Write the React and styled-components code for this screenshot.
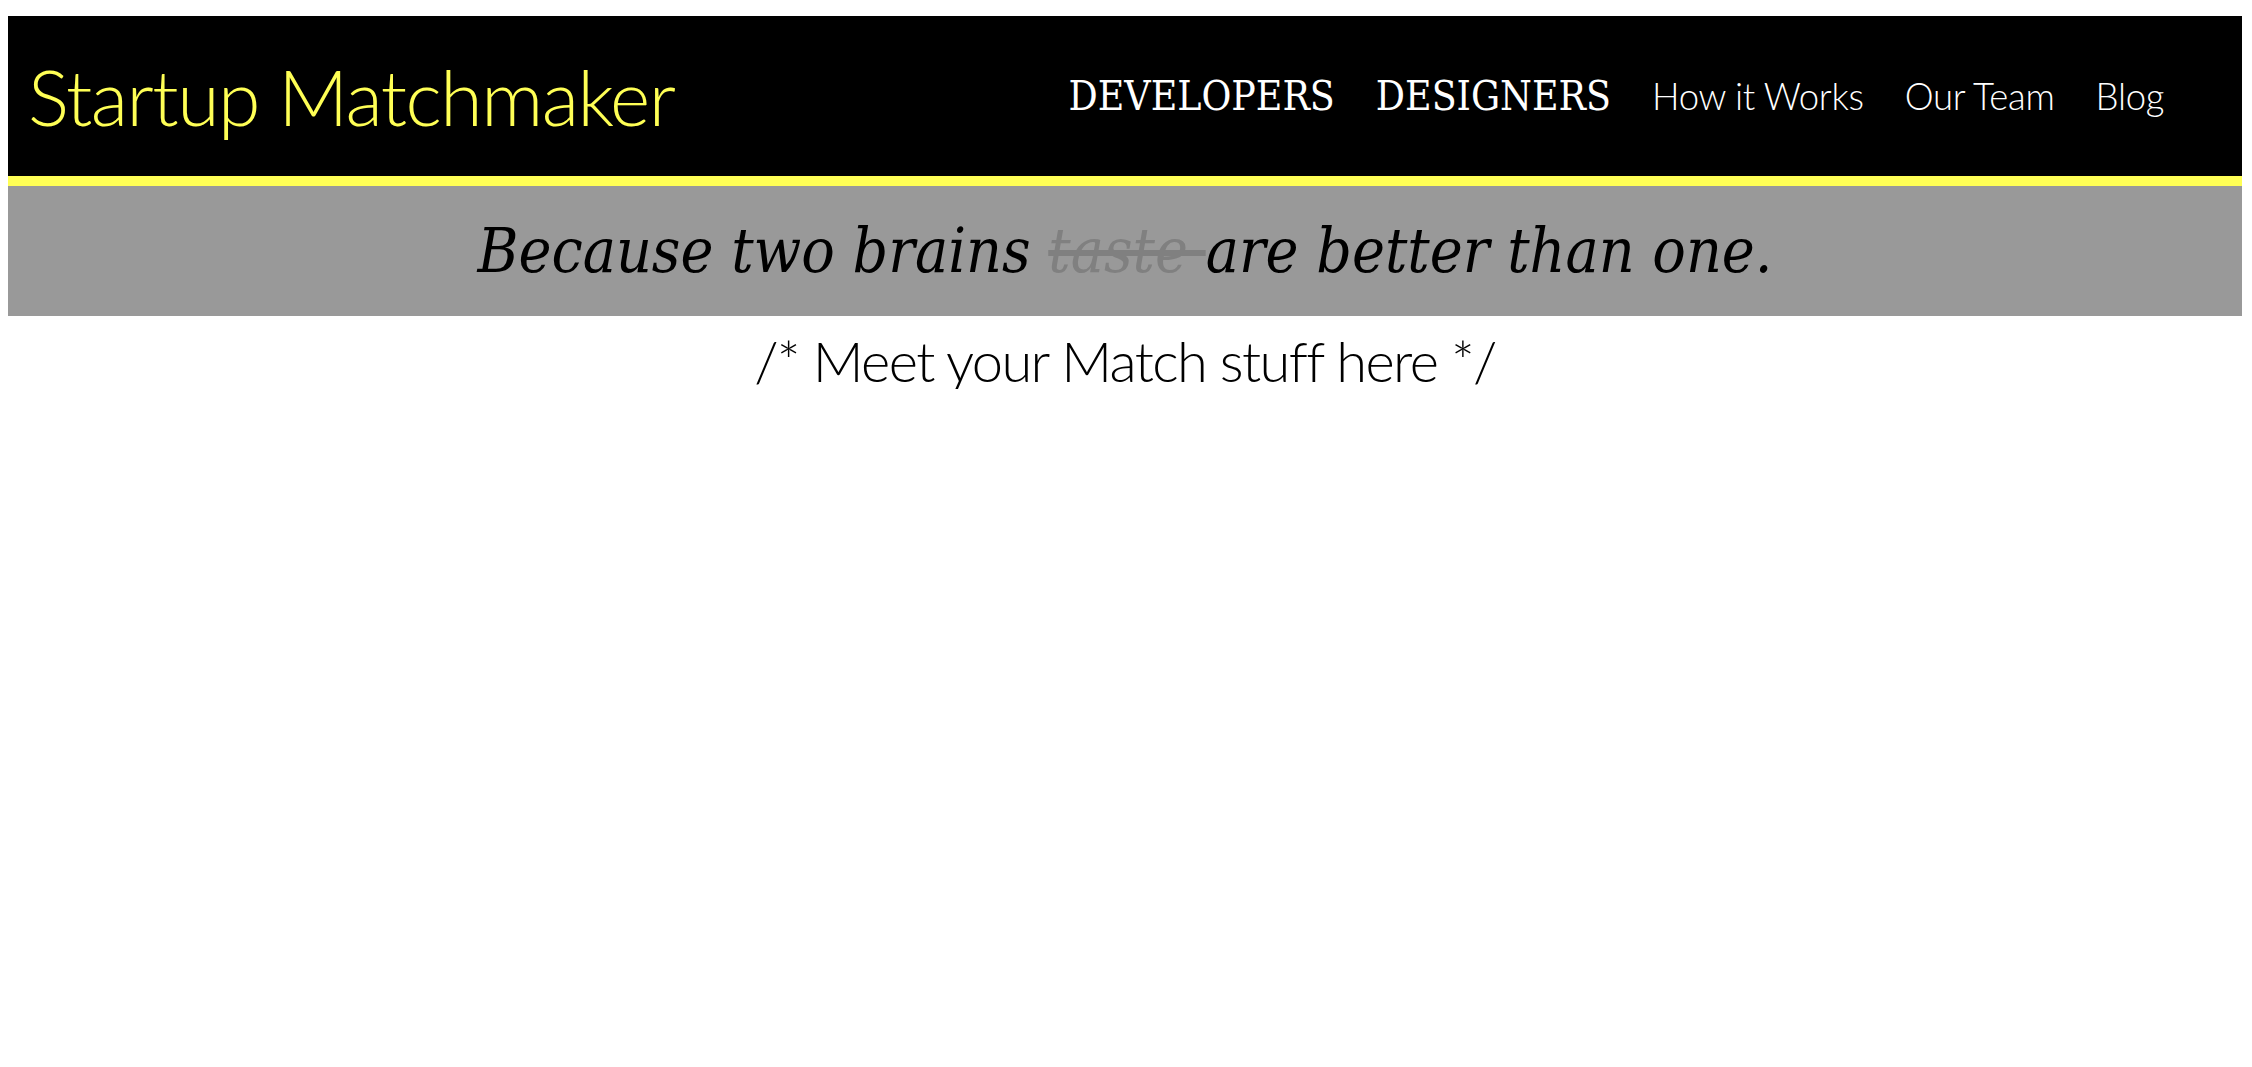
import React from 'react';
import styled, { createGlobalStyle } from 'styled-components';

const GlobalStyle = createGlobalStyle`
  html, body {
    margin: 0;
    padding: 0;
    background: #ffffff;
  }
`;

const Page = styled.div`
  margin: 16px 10px 0 8px;
`;

const Header = styled.header`
  height: 160px;
  background: #000000;
  border-bottom: 10px solid #ffff55;
  display: flex;
  align-items: center;
  justify-content: space-between;
  padding: 0 78px 0 20px;
`;

const Logo = styled.h1`
  margin: 0;
  font-family: 'Lato', 'Open Sans', sans-serif;
  font-weight: 300;
  font-size: 77px;
  line-height: 1;
  letter-spacing: -1.5px;
  color: #ffff55;
`;

const Nav = styled.nav`
  display: flex;
  align-items: baseline;
  gap: 41px;
`;

const NavLink = styled.a`
  color: #ffffff;
  text-decoration: none;
  line-height: 1;
  font-family: ${(p) => (p.$serif ? "'DejaVu Serif Condensed', 'DejaVu Serif', serif" : "'Lato', 'Open Sans', sans-serif")};
  font-weight: ${(p) => (p.$serif ? 400 : 300)};
  font-size: ${(p) => (p.$serif ? '40.5px' : '36.5px')};
  letter-spacing: ${(p) => (p.$serif ? '0' : '-0.3px')};
`;

const Banner = styled.div`
  height: 130px;
  background: #999999;
  display: flex;
  align-items: center;
  justify-content: center;
`;

const Tagline = styled.p`
  margin: 0;
  font-family: 'DejaVu Serif Condensed', 'DejaVu Serif', serif;
  font-style: italic;
  font-size: 62px;
  line-height: 1;
  color: #000000;
`;

const Struck = styled.s`
  color: #808080;
  text-decoration-color: #808080;
`;

const Placeholder = styled.p`
  margin: 17px 0 0;
  text-align: center;
  font-family: 'Lato', 'Open Sans', sans-serif;
  font-weight: 300;
  font-size: 56px;
  line-height: 1;
  letter-spacing: -1.6px;
  color: #000000;
`;

const links = [
  { label: 'DEVELOPERS', serif: true },
  { label: 'DESIGNERS', serif: true },
  { label: 'How it Works' },
  { label: 'Our Team' },
  { label: 'Blog' },
];

const App = () => {
  return (
    <Page>
      <GlobalStyle />
      <Header>
        <Logo>Startup Matchmaker</Logo>
        <Nav>
          {links.map((l) => (
            <NavLink key={l.label} href="#" $serif={l.serif}>
              {l.label}
            </NavLink>
          ))}
        </Nav>
      </Header>
      <Banner>
        <Tagline>
          Because two brains <Struck>taste </Struck>are better than one.
        </Tagline>
      </Banner>
      <Placeholder>/* Meet your Match stuff here */</Placeholder>
    </Page>
  );
};

export default App;
